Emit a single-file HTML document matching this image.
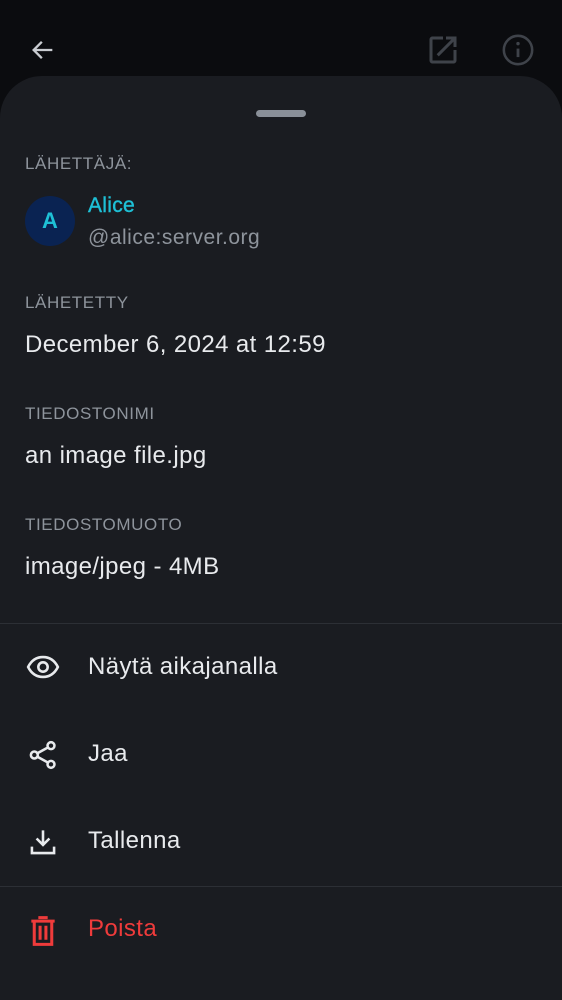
<!DOCTYPE html>
<html><head><meta charset="utf-8"><style>
html,body{margin:0;padding:0}
body{width:562px;height:1000px;background:#0b0c0f;position:relative;overflow:hidden;font-family:"Liberation Sans",sans-serif}
.sheet{position:absolute;left:0;top:76px;width:562px;height:924px;background:#1a1c21;border-radius:42px 42px 0 0}
.t{position:absolute;line-height:1;white-space:nowrap}
.lab{font-size:17px;color:#8e949c;letter-spacing:0.6px;left:25px}
.val{font-size:24px;color:#e8eaed;left:25px;letter-spacing:0.4px}
.act{font-size:24px;color:#e8eaed;left:88px;letter-spacing:0.4px}
.div{position:absolute;left:0;width:562px;height:1px;background:#2c2f35}
svg{position:absolute}
</style></head><body>
<svg style="left:29px;top:36px" width="28" height="28" viewBox="0 0 24 24"><path d="M20 12H5M11 5l-7 7 7 7" fill="none" stroke="#c9ccd1" stroke-width="2"/></svg>
<svg style="left:425px;top:32px" width="36" height="36" viewBox="0 0 24 24"><path d="M19 19H5V5h7V3H5c-1.11 0-2 .9-2 2v14c0 1.1.89 2 2 2h14c1.1 0 2-.9 2-2v-7h-2v7zM14 3v2h3.59l-9.830 9.83 1.41 1.41L19 6.41V10h2V3h-7z" fill="#3f434a"/></svg>
<svg style="left:501px;top:33px" width="34" height="34" viewBox="0 0 24 24"><circle cx="12" cy="12" r="10" fill="none" stroke="#3f434a" stroke-width="1.8"/><path d="M12 11v6" stroke="#3f434a" stroke-width="2"/><circle cx="12" cy="7.5" r="1.2" fill="#3f434a"/></svg>
<div class="sheet"></div>
<div style="position:absolute;left:256px;top:110px;width:50px;height:7px;border-radius:4px;background:#8a9099"></div>
<div class="t lab" style="top:155px">LÄHETTÄJÄ:</div>
<div style="position:absolute;left:25px;top:196px;width:50px;height:50px;border-radius:50%;background:#0a2352;color:#1ec0d6;font-weight:bold;font-size:22px;line-height:50px;text-align:center">A</div>
<div class="t" style="left:88px;top:195px;font-size:21px;color:#1ec0d6;-webkit-text-stroke:0.4px #1ec0d6;letter-spacing:0.3px">Alice</div>
<div class="t" style="left:88px;top:227px;font-size:21px;color:#8e949c;letter-spacing:0.5px">@alice:server.org</div>
<div class="t lab" style="top:294px">LÄHETETTY</div>
<div class="t val" style="top:333px">December 6, 2024 at 12:59</div>
<div class="t lab" style="top:405px">TIEDOSTONIMI</div>
<div class="t val" style="top:444px">an image file.jpg</div>
<div class="t lab" style="top:516px">TIEDOSTOMUOTO</div>
<div class="t val" style="top:555px">image/jpeg - 4MB</div>
<div class="div" style="top:623px"></div>
<svg style="left:26px;top:650px" width="34" height="34" viewBox="0 0 24 24"><path d="M1.5 12C4 7 8 5 12 5s8 2 10.5 7C20 17 16 19 12 19s-8-2-10.5-7z" fill="none" stroke="#e8eaed" stroke-width="1.8"/><circle cx="12" cy="12" r="3.3" fill="none" stroke="#e8eaed" stroke-width="1.8"/></svg>
<div class="t act" style="top:655px">Näytä aikajanalla</div>
<svg style="left:27px;top:738px" width="32" height="34" viewBox="0 0 24 24"><circle cx="18" cy="5" r="2.6" fill="none" stroke="#e8eaed" stroke-width="1.9"/><circle cx="5.5" cy="12" r="2.6" fill="none" stroke="#e8eaed" stroke-width="1.9"/><circle cx="18" cy="19" r="2.6" fill="none" stroke="#e8eaed" stroke-width="1.9"/><path d="M7.8 10.7l8-4.4M7.8 13.3l8 4.4" stroke="#e8eaed" stroke-width="1.9"/></svg>
<div class="t act" style="top:742px">Jaa</div>
<svg style="left:29px;top:828px" width="28" height="28" viewBox="0 0 24 24"><path d="M12 2v12M6.5 9l5.5 5.5L17.5 9M2.5 16v5.5h19V16" fill="none" stroke="#e8eaed" stroke-width="2.2"/></svg>
<div class="t act" style="top:829px">Tallenna</div>
<div class="div" style="top:886px"></div>
<svg style="left:29px;top:915px" width="28" height="32" viewBox="0 0 24 27"><path d="M8 2h8M2 5h20M4.5 5v20h15V5M9.5 9v12M14.5 9v12" fill="none" stroke="#ef3b3b" stroke-width="2.6"/></svg>
<div class="t act" style="top:917px;color:#ef3b3b">Poista</div>
</body></html>
